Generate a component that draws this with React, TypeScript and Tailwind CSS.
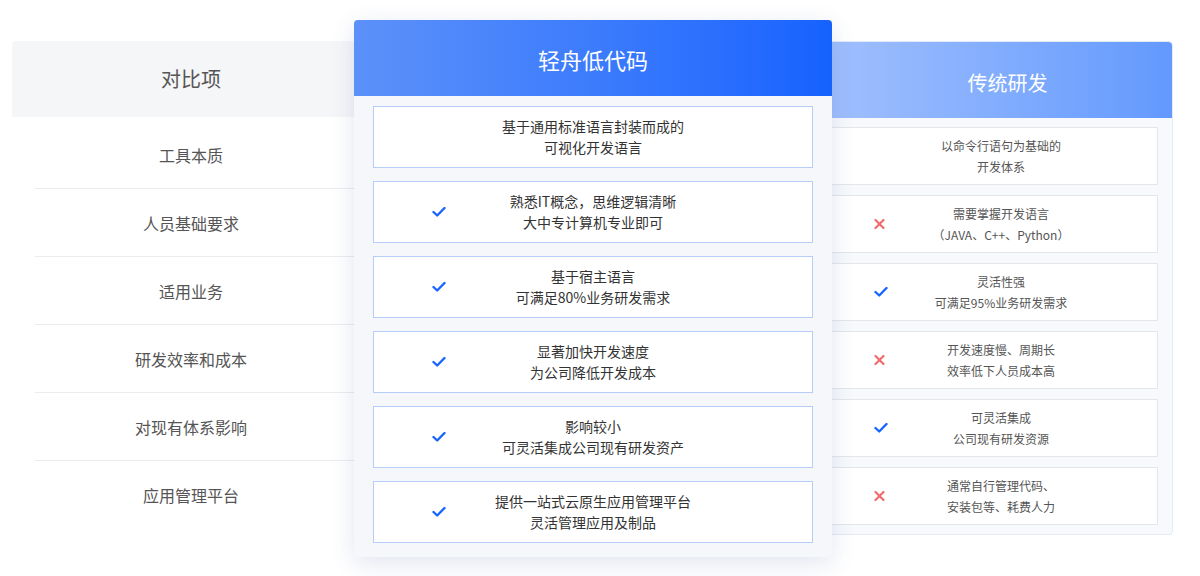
import type { ReactNode } from 'react';

const FONT = { fontFamily: '"Noto Sans CJK SC", "Noto Sans", sans-serif' };

type Mark = 'yes' | 'no' | null;

const labels = ['工具本质', '人员基础要求', '适用业务', '研发效率和成本', '对现有体系影响', '应用管理平台'];

const lowCode: { mark: Mark; lines: [string, string] }[] = [
  { mark: null, lines: ['基于通用标准语言封装而成的', '可视化开发语言'] },
  { mark: 'yes', lines: ['熟悉IT概念，思维逻辑清晰', '大中专计算机专业即可'] },
  { mark: 'yes', lines: ['基于宿主语言', '可满足80%业务研发需求'] },
  { mark: 'yes', lines: ['显著加快开发速度', '为公司降低开发成本'] },
  { mark: 'yes', lines: ['影响较小', '可灵活集成公司现有研发资产'] },
  { mark: 'yes', lines: ['提供一站式云原生应用管理平台', '灵活管理应用及制品'] },
];

const legacy: { mark: Mark; lines: [string, string] }[] = [
  { mark: null, lines: ['以命令行语句为基础的', '开发体系'] },
  { mark: 'no', lines: ['需要掌握开发语言', '（JAVA、C++、Python）'] },
  { mark: 'yes', lines: ['灵活性强', '可满足95%业务研发需求'] },
  { mark: 'no', lines: ['开发速度慢、周期长', '效率低下人员成本高'] },
  { mark: 'yes', lines: ['可灵活集成', '公司现有研发资源'] },
  { mark: 'no', lines: ['通常自行管理代码、', '安装包等、耗费人力'] },
];

function Check() {
  return (
    <svg width="14" height="11" viewBox="0 0 14 11" fill="none">
      <path d="M1.5 5.5 L5.2 9 L12.5 1.5" stroke="#1764ff" strokeWidth="2.4" strokeLinecap="round" strokeLinejoin="round" />
    </svg>
  );
}

function Cross() {
  return (
    <svg width="11" height="11" viewBox="0 0 11 11" fill="none">
      <path d="M1.5 1.5 L9.5 9.5 M9.5 1.5 L1.5 9.5" stroke="#f26b6b" strokeWidth="2.2" strokeLinecap="round" />
    </svg>
  );
}

function MarkIcon({ mark }: { mark: Mark }): ReactNode {
  if (mark === 'yes') return <Check />;
  if (mark === 'no') return <Cross />;
  return null;
}

export default function App() {
  return (
    <div className="w-[1200px] h-[576px] bg-white overflow-hidden" style={FONT}>
      <div className="flex items-start pl-3 pt-5">
        {/* comparison labels */}
        <div className="mt-[21px] w-[358px]">
          <div className="h-[76px] bg-[#f5f6f8] rounded-tl-[4px] flex items-center justify-center text-[20px] text-[#555]">
            对比项
          </div>
          <div className="pt-[4px] pl-[23px]">
            {labels.map((l, i) => (
              <div
                key={l}
                className={`h-[68px] flex items-center justify-center pr-[23px] text-[16px] text-[#555] ${
                  i < labels.length - 1 ? 'border-b border-[#ececef]' : ''
                }`}
              >
                {l}
              </div>
            ))}
          </div>
        </div>

        {/* low code card */}
        <div className="relative z-10 -ml-[16px] w-[478px] rounded-[4px] bg-[#f5f7fa] shadow-[0_6px_24px_rgba(40,70,140,0.14)]">
          <div className="h-[76px] pt-[3px] rounded-t-[4px] bg-linear-to-r from-[#5c91f9] to-[#1662fe] flex items-center justify-center text-[22px] text-white">
            轻舟低代码
          </div>
          <div className="px-[19px] pt-[10px] pb-[14px] flex flex-col gap-[13px]">
            {lowCode.map((it, i) => (
              <div
                key={i}
                className="relative h-[62px] bg-white border border-[#b5cdf8] flex flex-col items-center justify-center text-[14px] leading-[21px] text-[#333]"
              >
                <div className="absolute left-[58px] top-1/2 -translate-y-1/2 flex">
                  <MarkIcon mark={it.mark} />
                </div>
                <span>{it.lines[0]}</span>
                <span>{it.lines[1]}</span>
              </div>
            ))}
          </div>
        </div>

        {/* traditional card */}
        <div className="mt-[21px] -ml-[30px] w-[371px] rounded-[4px] bg-[#f7f9fc] border border-[#e3eaf6]">
          <div className="h-[76px] pt-[6px] pl-[40px] rounded-t-[4px] bg-linear-to-r from-[#a5c2fd] to-[#6399fd] flex items-center justify-center text-[20px] text-white">
            传统研发
          </div>
          <div className="pl-[9px] pr-[14px] pt-[9px] pb-[9px] flex flex-col gap-[10px]">
            {legacy.map((it, i) => (
              <div
                key={i}
                className="relative h-[58px] pl-[32px] bg-white border border-[#e4e7ec] flex flex-col items-center justify-center text-[12px] leading-[21px] text-[#555]"
              >
                <div className="absolute left-[61px] top-1/2 -translate-y-1/2 flex">
                  <MarkIcon mark={it.mark} />
                </div>
                <span>{it.lines[0]}</span>
                <span>{it.lines[1]}</span>
              </div>
            ))}
          </div>
        </div>
      </div>
    </div>
  );
}
